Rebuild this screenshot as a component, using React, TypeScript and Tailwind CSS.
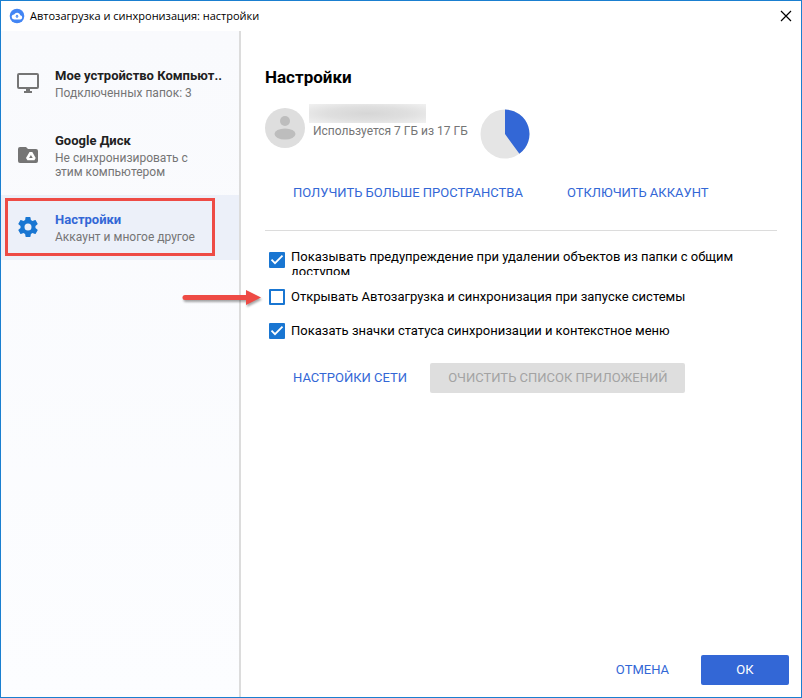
import { useState, type ReactNode } from "react";

const font = "font-['Roboto','Liberation_Sans',sans-serif]";
const titleFont = "font-['Open_Sans','Noto_Sans',sans-serif]";

function CloudLogo() {
  return (
    <svg width="16" height="16" viewBox="0 0 16 16" aria-hidden="true">
      <circle cx="8" cy="8" r="7.300" fill="#4285f4" />
      <path
        d="M11.300 7.300A3.400 3.400 0 0 0 5.100 6.400 2.500 2.500 0 0 0 5.300 11.400H11A2.050 2.050 0 0 0 11.300 7.300Z"
        fill="#fff"
      />
      <path d="M8 6.500 6.200 8.500H7.400V10H8.600V8.500H9.800Z" fill="#4285f4" />
    </svg>
  );
}

function MonitorIcon() {
  return (
    <svg width="24" height="22" viewBox="0 0 24 22" aria-hidden="true">
      <rect x="2" y="2" width="20" height="14" rx="1" fill="none" stroke="#757575" strokeWidth="2" />
      <path d="M10 16h4v3h2v2H8v-2h2z" fill="#757575" />
    </svg>
  );
}

function DriveFolderIcon() {
  return (
    <svg width="24" height="24" viewBox="0 0 24 24" aria-hidden="true">
      <path
        d="M20 6h-8l-2-2H4a2 2 0 0 0-2 2v12a2 2 0 0 0 2 2h16a2 2 0 0 0 2-2V8a2 2 0 0 0-2-2Z"
        fill="#757575"
      />
      <path d="M13.500 9h2.800l3.400 5.900-1.300 2.300h-7L10 14.900Z" fill="#fff" />
      <path d="M14.900 11.900 16.700 15H13.100Z" fill="#757575" />
    </svg>
  );
}

function GearIcon() {
  return (
    <svg width="24" height="24" viewBox="0 0 24 24" aria-hidden="true">
      <path
        d="M19.43 12.98c.04-.32.07-.64.07-.98s-.03-.66-.07-.98l2.11-1.65c.19-.15.24-.42.12-.64l-2-3.46c-.12-.22-.39-.3-.61-.22l-2.49 1c-.52-.4-1.08-.73-1.69-.98l-.38-2.65A.49.49 0 0 0 14 2h-4c-.25 0-.46.18-.49.42l-.38 2.65c-.61.25-1.17.59-1.69.98l-2.49-1c-.23-.09-.49 0-.61.22l-2 3.46c-.13.22-.07.49.12.64l2.11 1.65c-.04.32-.07.65-.07.98s.03.66.07.98l-2.11 1.65c-.19.15-.24.42-.12.64l2 3.46c.12.22.39.3.61.22l2.49-1c.52.4 1.08.73 1.69.98l.38 2.65c.03.24.24.42.49.42h4c.25 0 .46-.18.49-.42l.38-2.65c.61-.25 1.17-.59 1.69-.98l2.49 1c.23.09.49 0 .61-.22l2-3.46c.12-.22.07-.49-.12-.64l-2.11-1.65ZM12 15.5a3.5 3.5 0 1 1 0-7 3.5 3.5 0 0 1 0 7Z"
        fill="#1976d2"
      />
    </svg>
  );
}

function NavItem({
  icon,
  title,
  text,
  active = false,
}: {
  icon: ReactNode;
  title: string;
  text: string;
  active?: boolean;
}) {
  return (
    <button
      type="button"
      aria-current={active ? "page" : undefined}
      className={`relative flex w-full items-center gap-[15px] py-4 pr-4 pl-[15px] text-left ${active ? "bg-[#ecf0f9]" : ""}`}
    >
      <span className="flex w-6 shrink-0 justify-center pb-0.5">{icon}</span>
      <span className="min-w-0 flex-1">
        <span
          className={`block pb-0.5 text-[13px] leading-[17px] font-bold whitespace-nowrap ${active ? "text-[#3367d6]" : "text-[#212121]"}`}
        >
          {title}
        </span>
        <span className="block max-w-[150px] text-xs leading-[14px] text-[#757575]">{text}</span>
      </span>
      {active && (
        <span className="pointer-events-none absolute top-[3px] bottom-1 left-1 w-[210px] border-3 border-[#ee4b45]" />
      )}
    </button>
  );
}

function Tick({ id, initial }: { id: string; initial: boolean }) {
  const [on, setOn] = useState(initial);
  return (
    <span className="relative block size-4 shrink-0">
      <input
        id={id}
        type="checkbox"
        checked={on}
        onChange={(e) => setOn(e.target.checked)}
        className="block size-4 appearance-none rounded-[1px] border-2 border-[#1976d2] bg-white checked:bg-[#1976d2]"
      />
      {on && (
        <svg
          className="pointer-events-none absolute inset-0"
          width="16"
          height="16"
          viewBox="0 0 16 16"
          aria-hidden="true"
        >
          <path d="M2.500 7.700 6 11.200 13.500 3.700" fill="none" stroke="#fff" strokeWidth="1.800" />
        </svg>
      )}
    </span>
  );
}

function Arrow() {
  return (
    <svg
      className="pointer-events-none absolute top-1/2 right-full mr-1 -mt-2.5 drop-shadow-[1px_2px_1px_rgba(0,0,0,0.35)]"
      width="84"
      height="20"
      viewBox="0 0 84 20"
      aria-hidden="true"
    >
      <path d="M4 10.500H66" stroke="#ee4b45" strokeWidth="5" strokeLinecap="round" />
      <path d="M65 3 80 10.500 65 18Z" fill="#ee4b45" />
    </svg>
  );
}

const flat = "text-[13px] leading-4 text-[#3367d6]";

export default function App() {
  return (
    <div
      className={`flex min-h-screen flex-col border border-[#1a7fd0] bg-white text-[13px] text-black ${font}`}
    >
      <header className="flex h-[30px] shrink-0 items-center gap-[5px] pr-[7px] pl-2">
        <CloudLogo />
        <h1 className={`flex-1 text-[11px] leading-4 ${titleFont}`}>
          Автозагрузка и синхронизация: настройки
        </h1>
        <button type="button" aria-label="Закрыть" className="flex size-4 items-center justify-center">
          <svg width="12" height="12" viewBox="0 0 12 12" aria-hidden="true">
            <path d="M1 1 11 11M11 1 1 11" stroke="#000" strokeWidth="1.200" />
          </svg>
        </button>
      </header>

      <div className="flex flex-1">
        <nav className="w-60 shrink-0 border-r-2 border-[#dcdcdc] bg-linear-to-b from-[#f9fafd] to-[#fcfdff] pt-5">
          <NavItem icon={<MonitorIcon />} title="Мое устройство Компьют.." text="Подключенных папок: 3" />
          <NavItem
            icon={<DriveFolderIcon />}
            title="Google Диск"
            text="Не синхронизировать с этим компьютером"
          />
          <NavItem icon={<GearIcon />} title="Настройки" text="Аккаунт и многое другое" active />
        </nav>

        <main className="flex min-w-0 flex-1 flex-col">
          <div className="flex-1 pt-9 pr-6 pl-6">
            <h2 className="text-[17px] leading-5 font-bold">Настройки</h2>

            <div className="mt-[17px] flex h-[55px] items-start">
              <svg className="mt-1" width="40" height="40" viewBox="0 0 40 40" aria-hidden="true">
                <circle cx="20" cy="20" r="20" fill="#dedede" />
                <circle cx="20" cy="13" r="5" fill="#bdbdbd" />
                <ellipse cx="20" cy="26" rx="10.500" ry="5.500" fill="#bdbdbd" />
              </svg>
              <div className="ml-1">
                <div className="h-[19px] w-[117px] bg-radial from-[#d6d6d6] via-[#dfdfdf] to-[#f1f1f1]" />
                <p className="pl-1 text-xs leading-4 text-[#757575]">Используется 7 ГБ из 17 ГБ</p>
              </div>
              <svg className="mt-[5px] ml-3" width="50" height="50" viewBox="0 0 50 50" aria-hidden="true">
                <circle cx="25" cy="25" r="24.500" fill="#e5e5e5" />
                <path d="M25 25V.5A24.500 24.500 0 0 1 39.400 44.800Z" fill="#3367d6" />
              </svg>
            </div>

            <div className="mt-[26px] flex gap-11 pl-7">
              <button type="button" className={flat}>
                ПОЛУЧИТЬ БОЛЬШЕ ПРОСТРАНСТВА
              </button>
              <button type="button" className={flat}>
                ОТКЛЮЧИТЬ АККАУНТ
              </button>
            </div>

            <hr className="mt-[29px] border-[#dcdcdc]" />

            <div className="mt-3 pl-1">
              <div className="flex h-[37px] items-start gap-[6px] pt-[6px]">
                <div className="pt-[3px]">
                  <Tick id="warn" initial />
                </div>
                <label htmlFor="warn" className="h-[26px] max-w-[480px] overflow-hidden leading-[15px]">
                  Показывать предупреждение при удалении объектов из папки с общим доступом
                </label>
              </div>
              <div className="relative flex h-[34px] items-center gap-[6px]">
                <Arrow />
                <Tick id="autostart" initial={false} />
                <label htmlFor="autostart">Открывать Автозагрузка и синхронизация при запуске системы</label>
              </div>
              <div className="flex h-[34px] items-center gap-[6px]">
                <Tick id="status" initial />
                <label htmlFor="status">Показать значки статуса синхронизации и контекстное меню</label>
              </div>
            </div>

            <div className="mt-[15px] flex items-center gap-[23px] pl-7">
              <button type="button" className={flat}>
                НАСТРОЙКИ СЕТИ
              </button>
              <button type="button" disabled className="h-[30px] rounded-[2px] bg-[#dedede] px-[18px] text-[#a3a3a3]">
                ОЧИСТИТЬ СПИСОК ПРИЛОЖЕНИЙ
              </button>
            </div>
          </div>

          <footer className="flex items-center justify-end gap-8 pr-3 pb-3">
            <button type="button" className={flat}>
              ОТМЕНА
            </button>
            <button type="button" className="h-[30px] w-[88px] rounded-[2px] bg-[#3367d6] text-white">
              ОК
            </button>
          </footer>
        </main>
      </div>
    </div>
  );
}
